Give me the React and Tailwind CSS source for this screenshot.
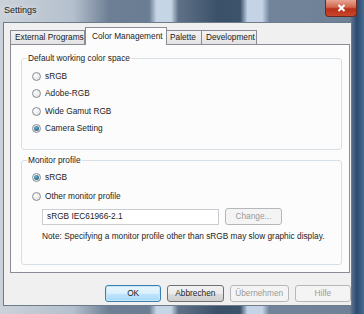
import React from 'react';

const font = { fontFamily: '"Liberation Sans", Arial, sans-serif' };

const Radio = ({ checked, label }) => (
  <div className="flex items-center gap-[4px] h-[12px]">
    <span className="w-[9px] h-[9px] rounded-full border border-[#8a8f94] bg-[radial-gradient(circle_at_35%_35%,#ffffff,#d8dadc)] flex items-center justify-center">
      {checked && <span className="w-[5px] h-[5px] rounded-full bg-[radial-gradient(circle_at_40%_35%,#5fb3d0,#1d4a66)]"></span>}
    </span>
    <span className="text-[8.3px] text-[#1c1c1c] whitespace-nowrap">{label}</span>
  </div>
);

const Button = ({ children, disabled, primary, className = '' }) => (
  <div
    className={`h-[17px] rounded-[3px] border flex items-center justify-center text-[8.3px] whitespace-nowrap ${
      disabled
        ? 'border-[#b4b8bb] bg-[#f4f4f4] text-[#9a9a9a]'
        : primary
        ? 'border-[#3c7fb1] bg-[linear-gradient(#eaf6fd_0%,#d9f0fc_50%,#bee6fd_51%,#a7d9f5_100%)] text-[#1c1c1c] shadow-[inset_0_0_0_1px_#c6e6f8]'
        : 'border-[#707070] bg-[linear-gradient(#f2f2f2_0%,#ebebeb_50%,#dddddd_51%,#cfcfcf_100%)] text-[#1c1c1c]'
    } ${className}`}
  >
    {children}
  </div>
);

const Group = ({ title, className = '', children }) => (
  <div className={`relative border border-[#d5dfe5] rounded-[3px] ${className}`}>
    <span className="absolute left-[5px] top-[-7px] px-[1px] bg-[#fcfcfc] text-[8.3px] text-[#1c1c1c] leading-[12px] whitespace-nowrap">{title}</span>
    {children}
  </div>
);

export default function App() {
  return (
    <div
      style={font}
      className="w-[364px] h-[314px] relative overflow-hidden bg-[linear-gradient(90deg,#cbd2da_0%,#b4c0cd_20%,#6d7f94_30%,#6b7d92_41%,#c5d5e5_43%,#c5d5e5_47%,#5f7186_49%,#3b5069_60%,#3d526b_66%,#c4d4e6_68%,#c4d4e6_72%,#72849a_74%,#6f8196_96%,#2a4a70_98%,#4a6a90_100%)]"
    >
      {/* title bar */}
      <div className="h-[22px] flex items-center pl-[4px]">
        <span className="text-[9px] text-[#1a1a1a] [text-shadow:0_0_6px_#ffffff]">Settings</span>
      </div>
      <div className="absolute right-[7px] top-0 w-[32px] h-[17px] rounded-b-[4px] border border-t-0 border-[#6b2a20] bg-[linear-gradient(#e8a493_0%,#d0664f_45%,#b8301a_55%,#c9462a_100%)] flex items-center justify-center">
        <svg width="9" height="8" viewBox="0 0 9 8">
          <path d="M1.5 1 L7.5 7 M7.5 1 L1.5 7" stroke="#ffffff" strokeWidth="2" />
        </svg>
      </div>

      {/* client area */}
      <div className="ml-[3px] w-[349px] h-[284px] bg-[#f0f0f0] border border-[#6d7b89] flex flex-col pl-[6px] pt-[3px]">
        {/* tabs */}
        <div className="flex items-end h-[18px] text-[8.3px] text-[#1c1c1c] whitespace-nowrap">
          <div className="w-[75px] h-[14px] border border-b-0 border-[#898c95] bg-[linear-gradient(#f2f2f2,#e3e3e3)] flex items-center pl-[4px]">External Programs</div>
          <div className="relative z-10 w-[82px] h-[18px] -mb-[1px] border border-b-0 border-[#898c95] bg-[#fcfcfc] flex items-center pl-[6px]">Color Management</div>
          <div className="w-[35px] h-[14px] border border-b-0 border-l-0 border-[#898c95] bg-[linear-gradient(#f2f2f2,#e3e3e3)] flex items-center pl-[3px]">Palette</div>
          <div className="w-[55px] h-[14px] border border-b-0 border-l-0 border-[#898c95] bg-[linear-gradient(#f2f2f2,#e3e3e3)] flex items-center pl-[4px]">Development</div>
        </div>

        {/* panel */}
        <div className="w-[340px] h-[229px] border border-[#898c95] bg-[#fcfcfc] pl-[10px] pr-[7px] pt-[13px] flex flex-col">
          <Group title="Default working color space" className="h-[92px] pl-[10px] pt-[11px] flex flex-col gap-[5.5px]">
            <Radio label="sRGB" />
            <Radio label="Adobe-RGB" />
            <Radio label="Wide Gamut RGB" />
            <Radio checked label="Camera Setting" />
          </Group>

          <Group title="Monitor profile" className="mt-[10px] h-[105px] pl-[10px] pt-[10px] flex flex-col">
            <Radio checked label="sRGB" />
            <div className="mt-[7px]">
              <Radio label="Other monitor profile" />
            </div>
            <div className="mt-[6px] ml-[10px] flex items-center gap-[6px]">
              <div className="w-[177px] h-[16px] border border-[#c9ccd1] bg-white flex items-center pl-[4px] text-[8.3px] text-[#1c1c1c]">sRGB IEC61966-2.1</div>
              <Button disabled className="w-[57px]">Change...</Button>
            </div>
            <div className="mt-[5px] ml-[10px] text-[8.3px] text-[#1c1c1c] whitespace-nowrap">Note: Specifying a monitor profile other than sRGB may slow graphic display.</div>
          </Group>
        </div>

        {/* buttons */}
        <div className="flex mt-[12px] pl-[95px] gap-[6px]">
          <Button primary className="w-[57px]">OK</Button>
          <Button className="w-[57px]">Abbrechen</Button>
          <Button disabled className="w-[60px]">Übernehmen</Button>
          <Button disabled className="w-[57px]">Hilfe</Button>
        </div>
      </div>
    </div>
  );
}
